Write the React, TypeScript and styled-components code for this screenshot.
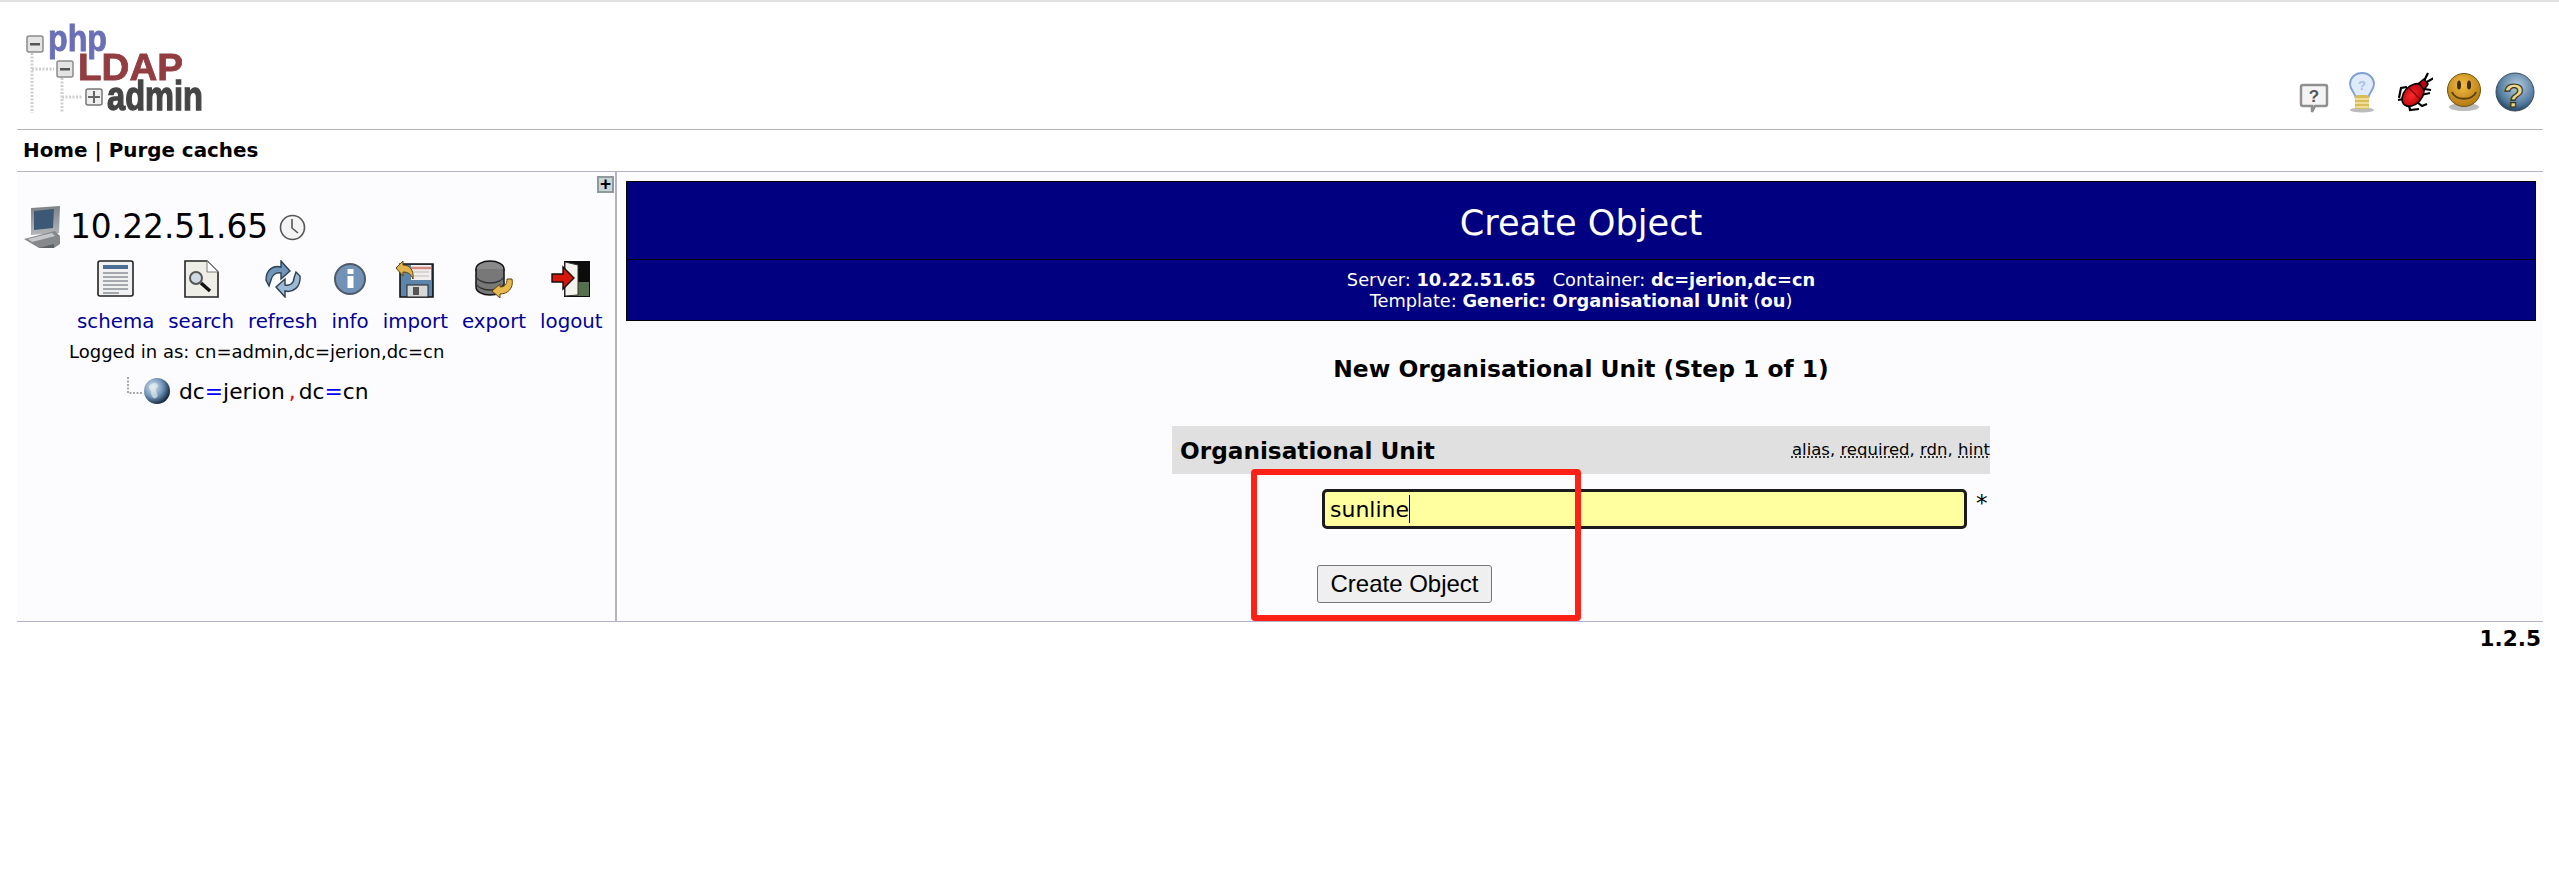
import React from "react";
import styled, { createGlobalStyle } from "styled-components";

const GlobalStyle = createGlobalStyle`
  html, body {
    margin: 0;
    padding: 0;
    background: #fff;
    font-family: "DejaVu Sans", Verdana, sans-serif;
    color: #000;
  }
`;

const RULE = "#b4b1c9";
const PANEL = "#fcfcff";

const Page = styled.div`
  min-height: 873px;
  border-top: 2px solid #e2e2e2;
  padding: 0 16px 0 17px;
  box-sizing: border-box;
`;

const Header = styled.header`
  height: 127px;
  display: flex;
  justify-content: space-between;
  align-items: flex-end;
  border-bottom: 1px solid ${RULE};
`;

const LogoWrap = styled.div`
  align-self: flex-start;
  margin: 13px 0 0 3px;
  line-height: 0;
`;

const HelpIcons = styled.div`
  display: flex;
  align-items: flex-end;
  padding: 0 8px 16px 0;
  gap: 11px;
  & > svg:first-child {
    margin-right: -3px;
  }
`;

const Nav = styled.nav`
  height: 41px;
  display: flex;
  align-items: center;
  padding-left: 6px;
  border-bottom: 1px solid ${RULE};
  font-size: 19.9px;
  font-weight: 700;
`;

const Main = styled.main`
  display: grid;
  grid-template-columns: 600px 1fr;
  height: 449px;
  border-bottom: 1px solid ${RULE};
  background: ${PANEL};
`;

const Sidebar = styled.aside`
  position: relative;
  border-right: 2px solid ${RULE};
  padding: 33px 0 0 6px;
  box-sizing: border-box;
`;

const ExpandButton = styled.div`
  position: absolute;
  top: 4px;
  right: 1px;
  width: 17px;
  height: 17px;
  box-sizing: border-box;
  border: 2px solid #8f9a9c;
  background: #c9d6d8;
  font: 700 19px/12px "Liberation Sans", sans-serif;
  text-align: center;
`;

const ServerRow = styled.div`
  display: flex;
  align-items: center;
  gap: 9px;
  height: 44px;
`;

const ServerName = styled.span`
  font-size: 32.8px;
  line-height: 44px;
  margin-right: 2px;
`;

const Actions = styled.div`
  display: flex;
  gap: 14px;
  padding: 11px 0 0 54px;
`;

const Action = styled.a`
  display: flex;
  flex-direction: column;
  align-items: center;
  gap: 12px;
  font-size: 19.8px;
  line-height: 24px;
  color: #000099;
`;

const LoggedIn = styled.div`
  font-size: 18px;
  line-height: 22px;
  padding: 7px 0 0 46px;
`;

const Tree = styled.div`
  display: flex;
  align-items: center;
  height: 36px;
  padding: 10px 0 0 104px;
  font-size: 21.8px;
`;

const Dn = styled.span`
  margin-left: 8px;
`;

const Eq = styled.span`
  color: #0000ff;
`;

const Comma = styled.span`
  color: #ff0000;
  margin: 0 3px 0 4px;
`;

const Content = styled.section`
  padding: 9px 7px 0 7px;
  border-left: 2px solid #fff;
  position: relative;
`;

const Banner = styled.div`
  background: #000080;
  border: 1px solid #000;
  color: #fff;
  text-align: center;
`;

const BannerTitle = styled.h1`
  margin: 0;
  height: 78px;
  border-bottom: 1px solid #000;
  box-sizing: border-box;
  font-size: 35.2px;
  font-weight: 400;
  line-height: 81px;
`;

const BannerMeta = styled.div`
  padding-top: 9px;
  height: 60px;
  box-sizing: border-box;
  font-size: 17.8px;
  line-height: 21px;
`;

const StepHeading = styled.h2`
  margin: 0;
  padding-top: 33px;
  height: 105px;
  box-sizing: border-box;
  font-size: 23.4px;
  line-height: 30px;
  font-weight: 700;
  text-align: center;
`;

const Form = styled.div`
  width: 818px;
  margin: 0 auto;
`;

const AttrHeader = styled.div`
  height: 48px;
  display: flex;
  align-items: center;
  justify-content: space-between;
  padding-left: 8px;
  background: #e0e0e0;
  font-size: 23.2px;
  font-weight: 700;
`;

const Hints = styled.span`
  font-size: 16.5px;
  font-weight: 400;
  margin-bottom: 2px;
`;

const Hint = styled.abbr`
  text-decoration: underline dotted;
  text-underline-offset: 2px;
`;

const FieldRow = styled.div`
  display: flex;
  align-items: flex-start;
  padding: 15px 0 0 150px;
`;

const Field = styled.div`
  width: 645px;
  height: 40px;
  box-sizing: border-box;
  border: 3.5px solid #1b1b1b;
  border-radius: 5px;
  background: #ffff9f;
  padding: 2px 0 0 5px;
  font-size: 22px;
  line-height: 32px;
  display: flex;
  align-items: center;
`;

const Caret = styled.span`
  display: inline-block;
  width: 1px;
  height: 28px;
  background: #000;
  margin-top: -2px;
`;

const Required = styled.span`
  margin-left: 9px;
  font-size: 23px;
  line-height: 28px;
`;

const CreateButton = styled.button`
  display: block;
  margin: 36px 0 0 145px;
  width: 175px;
  height: 38px;
  background: #efefef;
  border: 1px solid #767676;
  border-radius: 3px;
  color: #000;
  font: 400 24px "Liberation Sans", Arial, sans-serif;
  padding: 0;
`;

const Highlight = styled.div`
  position: absolute;
  left: 632px;
  top: 297px;
  width: 330px;
  height: 152px;
  box-sizing: border-box;
  border: 6px solid #ff2116;
  border-radius: 4px;
`;

const Version = styled.div`
  text-align: right;
  padding: 5px 2px 0 0;
  font-size: 21.6px;
  line-height: 24px;
  font-weight: 700;
`;

const Logo = () => (
  <svg width="190" height="110" viewBox="0 -10 190 110" role="img" aria-label="phpLDAPadmin">
    <defs>
      <filter id="soft"><feGaussianBlur stdDeviation="0.5" /></filter>
    </defs>
    <g filter="url(#soft)">
      <path d="M12 28V88M42 53V88M12 44H34M42 72H62" stroke="#cfcfcf" strokeWidth="3" strokeDasharray="2 1.5" fill="none" />
      <text x="28" y="26" fontFamily="Liberation Sans" fontWeight="700" fontSize="36" textLength="59" lengthAdjust="spacingAndGlyphs" fill="#6a6fb6" stroke="#6a6fb6" strokeWidth="0.8">php</text>
      <text x="58" y="55" fontFamily="Liberation Sans" fontWeight="700" fontSize="37" textLength="105" lengthAdjust="spacingAndGlyphs" fill="#923c41" stroke="#923c41" strokeWidth="0.8">LDAP</text>
      <text x="87" y="85" fontFamily="Liberation Sans" fontWeight="700" fontSize="41" textLength="96" lengthAdjust="spacingAndGlyphs" fill="#454545" stroke="#454545" strokeWidth="1.4">admin</text>
      <rect x="7" y="11" width="16" height="16" rx="2" fill="#e4e4e4" stroke="#8a8a8a" strokeWidth="1.5" />
      <rect x="10" y="18" width="10" height="2.5" fill="#555" />
      <rect x="37" y="36" width="16" height="16" rx="2" fill="#e4e4e4" stroke="#8a8a8a" strokeWidth="1.5" />
      <rect x="40" y="43" width="10" height="2.5" fill="#555" />
      <rect x="66" y="64" width="16" height="16" rx="2" fill="#eee" stroke="#777" strokeWidth="1.5" />
      <path d="M74 66V78M68 72H80" stroke="#666" strokeWidth="2" />
    </g>
  </svg>
);

const BubbleIcon = () => (
  <svg width="40" height="42" viewBox="0 0 40 42">
    <path d="M9 14h22a2 2 0 0 1 2 2v17a2 2 0 0 1-2 2H21l-3 6v-6H9a2 2 0 0 1-2-2V16a2 2 0 0 1 2-2z" fill="#f4f4f4" stroke="#8f8f8f" strokeWidth="2.5" />
    <text x="20" y="31" textAnchor="middle" fontFamily="Liberation Sans" fontWeight="700" fontSize="17" fill="#555">?</text>
  </svg>
);

const BulbIcon = () => (
  <svg width="40" height="42" viewBox="0 0 40 42">
    <ellipse cx="20" cy="39" rx="12" ry="2.5" fill="#bbb" />
    <path d="M20 2c7 0 12 5 12 11 0 6-5 8-6 15H14c-1-7-6-9-6-15C8 7 13 2 20 2z" fill="#dfeafa" stroke="#7f9fd0" strokeWidth="1.8" />
    <text x="20" y="19" textAnchor="middle" fontFamily="Liberation Sans" fontWeight="700" fontSize="13" fill="#a9bfe2">?</text>
    <rect x="13" y="24" width="14" height="14" rx="3" fill="#d8bd58" />
    <path d="M13 28h14M13 32h14M14 36h12" stroke="#f5e9b0" strokeWidth="1.6" />
  </svg>
);

const BugIcon = () => (
  <svg width="40" height="42" viewBox="0 0 40 42">
    <defs>
      <radialGradient id="bugBody" cx="45%" cy="55%" r="60%">
        <stop offset="0%" stopColor="#ff2a2a" />
        <stop offset="100%" stopColor="#b00008" />
      </radialGradient>
    </defs>
    <path
      d="M32 12l9-5M31 10l4-8M14 16l-6 1-2 10M11 28l-6 1M16 34l1 5 9-1M24 31l5 4 5-2M28 24l9-2M31 18l7 1"
      stroke="#000"
      strokeWidth="2.2"
      fill="none"
    />
    <ellipse cx="20" cy="24" rx="9" ry="13" transform="rotate(42 20 24)" fill="url(#bugBody)" stroke="#000" strokeWidth="1.6" />
    <path d="M26 12l5-4 4 5-4 6z" fill="#c40010" stroke="#000" strokeWidth="1.6" />
    <path d="M16 17l11 11" stroke="#7a0006" strokeWidth="1.3" />
  </svg>
);

const SmileIcon = () => (
  <svg width="40" height="42" viewBox="0 0 40 42">
    <defs>
      <radialGradient id="smile" cx="45%" cy="35%" r="65%">
        <stop offset="0%" stopColor="#f4bc40" />
        <stop offset="100%" stopColor="#b47a14" />
      </radialGradient>
    </defs>
    <ellipse cx="20" cy="36" rx="15" ry="4" fill="#bbb" />
    <circle cx="20" cy="19" r="16.5" fill="url(#smile)" stroke="#6d5316" strokeWidth="1" />
    <ellipse cx="15" cy="14" rx="2" ry="4.5" fill="#3f2c08" />
    <ellipse cx="25" cy="14" rx="2" ry="4.5" fill="#3f2c08" />
    <path d="M8 21c3 9 21 9 24 0" stroke="#5a4210" strokeWidth="2" fill="none" />
  </svg>
);

const HelpIcon = () => (
  <svg width="40" height="42" viewBox="0 0 40 42">
    <defs>
      <radialGradient id="helpBall" cx="55%" cy="35%" r="70%">
        <stop offset="0%" stopColor="#b7cfe0" />
        <stop offset="70%" stopColor="#50789c" />
        <stop offset="100%" stopColor="#1c3550" />
      </radialGradient>
    </defs>
    <circle cx="20" cy="21" r="19" fill="url(#helpBall)" stroke="#3b4b5b" />
    <text x="19" y="36" textAnchor="middle" fontFamily="Liberation Sans" fontWeight="700" fontSize="34" fill="#ecd98e" stroke="#3a3215" strokeWidth="1.2">?</text>
  </svg>
);

const ComputerIcon = () => (
  <svg width="38" height="44" viewBox="0 0 38 44">
    <defs>
      <linearGradient id="pc" x1="0" y1="0" x2="0" y2="1">
        <stop offset="0%" stopColor="#7d8286" />
        <stop offset="100%" stopColor="#b3b6b9" />
      </linearGradient>
    </defs>
    <path d="M8 3l29-2-1 27-28 2z" fill="url(#pc)" />
    <path d="M11 6l20-2-1 19-19 2z" fill="#3d5874" />
    <path d="M1 34l31-8 5 5v8l-6 4H16z" fill="#85898d" />
    <path d="M5 34l24-6 3 3-23 6z" fill="#c6c9cb" />
    <path d="M16 43l15-4v4z" fill="#5e6064" />
  </svg>
);

const ClockIcon = () => (
  <svg width="27" height="27" viewBox="0 0 27 27">
    <circle cx="13.5" cy="13.5" r="12" fill="#f4f4f4" stroke="#555" strokeWidth="1.6" />
    <path d="M13 5v9l6 5" stroke="#555" strokeWidth="1.6" fill="none" />
  </svg>
);

const SchemaIcon = () => (
  <svg width="38" height="38" viewBox="0 0 38 38">
    <rect x="1" y="1" width="35" height="35" rx="2" fill="#f1f1f1" stroke="#222" strokeWidth="1.6" />
    <rect x="6" y="5" width="25" height="4" fill="#4b6d96" />
    <path d="M6 13h25M6 17h25M6 21h25M6 25h25M6 29h25M6 33h16" stroke="#8a8f95" strokeWidth="1.5" />
  </svg>
);

const SearchIcon = () => (
  <svg width="36" height="38" viewBox="0 0 36 38">
    <path d="M2 1h22l11 11v25H2z" fill="#eeeee6" stroke="#222" strokeWidth="1.6" />
    <path d="M24 1v11h11z" fill="#fff" stroke="#777" />
    <circle cx="13" cy="18" r="6" fill="#cfd9e4" stroke="#555" strokeWidth="2" />
    <path d="M18 23l9 8" stroke="#111" strokeWidth="3.5" />
  </svg>
);

const RefreshIcon = () => (
  <svg width="38" height="38" viewBox="0 0 38 38">
    <path d="M2 20C2 9 10 5 17 7V1l9 10-9 8v-6c-5-1-9 2-10 7l-2 6z" fill="#6f95bb" stroke="#2c3e50" strokeWidth="1.4" />
    <path d="M36 16c1 11-7 17-15 15v6l-9-10 9-8v6c5 1 9-2 9-7l2-6z" fill="#9cbad6" stroke="#2c3e50" strokeWidth="1.4" />
  </svg>
);

const InfoIcon = () => (
  <svg width="34" height="38" viewBox="0 0 34 38">
    <circle cx="17" cy="19" r="15" fill="#7392b8" stroke="#4d5a68" strokeWidth="2" />
    <rect x="14.5" y="16" width="6" height="12" fill="#fff" />
    <rect x="14.5" y="9" width="6" height="5" fill="#fff" />
  </svg>
);

const ImportIcon = () => (
  <svg width="40" height="38" viewBox="0 0 40 38">
    <path d="M5 4h33v33H5z" fill="#5d86aa" stroke="#111" strokeWidth="1.6" />
    <rect x="16" y="5" width="20" height="15" fill="#f3eeee" />
    <path d="M16 8h20" stroke="#d58a80" strokeWidth="2.5" />
    <path d="M18 12h16M18 16h16" stroke="#bbb" />
    <rect x="12" y="25" width="21" height="12" fill="#d8d8d8" stroke="#222" />
    <rect x="18" y="27" width="6" height="8" fill="#555" />
    <path d="M1 8l7-7v4c6 0 11 4 10 14-2-5-5-7-10-7v4z" fill="#e0b34c" stroke="#5a4310" />
  </svg>
);

const ExportIcon = () => (
  <svg width="40" height="38" viewBox="0 0 40 38">
    <ellipse cx="16" cy="9" rx="14" ry="8" fill="#8a8a8a" stroke="#111" strokeWidth="1.5" />
    <path d="M2 9v18c0 5 7 8 14 8s14-3 14-8V9" fill="#787878" stroke="#111" strokeWidth="1.5" />
    <path d="M2 15c0 5 7 8 14 8s14-3 14-8M2 22c0 5 7 8 14 8s14-3 14-8" stroke="#333" strokeWidth="1.3" fill="none" />
    <path d="M18 31l8-7v3c5 0 7-3 7-8h5c2 10-5 15-12 15v4z" fill="#e7b94d" stroke="#5a4310" />
  </svg>
);

const LogoutIcon = () => (
  <svg width="40" height="38" viewBox="0 0 40 38">
    <rect x="13" y="1" width="26" height="36" fill="#0c0c0c" />
    <path d="M14 22h24v14H14z" fill="#56704f" />
    <path d="M14 2l13 3v30l-13 1z" fill="#f4f4ec" stroke="#333" />
    <path d="M1 14h11V7l11 11-11 11v-7H1z" fill="#d8170c" stroke="#111" strokeWidth="1.4" />
  </svg>
);

const ConnectorIcon = () => (
  <svg width="16" height="28" viewBox="0 0 16 28">
    <path d="M1 0v16h15" stroke="#a8a8a8" strokeWidth="2" strokeDasharray="2 1.5" fill="none" />
  </svg>
);

const GlobeIcon = () => (
  <svg width="28" height="28" viewBox="0 0 28 28">
    <defs>
      <radialGradient id="globe" cx="35%" cy="35%" r="70%">
        <stop offset="0%" stopColor="#dbe6f0" />
        <stop offset="55%" stopColor="#6f94b8" />
        <stop offset="100%" stopColor="#0f2238" />
      </radialGradient>
    </defs>
    <circle cx="14" cy="14" r="13" fill="url(#globe)" />
    <path d="M7 8c4-3 7-2 8 0s-3 3-2 6 3 5 0 7-5-3-5-6-4-4-1-7z" fill="#f0f2f3" opacity=".6" />
  </svg>
);

const actions = [
  { label: "schema", icon: <SchemaIcon /> },
  { label: "search", icon: <SearchIcon /> },
  { label: "refresh", icon: <RefreshIcon /> },
  { label: "info", icon: <InfoIcon /> },
  { label: "import", icon: <ImportIcon /> },
  { label: "export", icon: <ExportIcon /> },
  { label: "logout", icon: <LogoutIcon /> },
];

export default function App() {
  return (
    <>
      <GlobalStyle />
      <Page>
        <Header>
          <LogoWrap>
            <Logo />
          </LogoWrap>
          <HelpIcons>
            <BubbleIcon />
            <BulbIcon />
            <BugIcon />
            <SmileIcon />
            <HelpIcon />
          </HelpIcons>
        </Header>
        <Nav>Home | Purge caches</Nav>
        <Main>
          <Sidebar>
            <ExpandButton>+</ExpandButton>
            <ServerRow>
              <ComputerIcon />
              <ServerName>10.22.51.65</ServerName>
              <ClockIcon />
            </ServerRow>
            <Actions>
              {actions.map((a) => (
                <Action key={a.label}>
                  {a.icon}
                  {a.label}
                </Action>
              ))}
            </Actions>
            <LoggedIn>Logged in as: cn=admin,dc=jerion,dc=cn</LoggedIn>
            <Tree>
              <ConnectorIcon />
              <GlobeIcon />
              <Dn>
                dc<Eq>=</Eq>jerion<Comma>,</Comma>dc<Eq>=</Eq>cn
              </Dn>
            </Tree>
          </Sidebar>
          <Content>
            <Banner>
              <BannerTitle>Create Object</BannerTitle>
              <BannerMeta>
                Server: <b>10.22.51.65</b>&nbsp;&nbsp; Container: <b>dc=jerion,dc=cn</b>
                <br />
                Template: <b>Generic: Organisational Unit</b> (<b>ou</b>)
              </BannerMeta>
            </Banner>
            <StepHeading>New Organisational Unit (Step 1 of 1)</StepHeading>
            <Form>
              <AttrHeader>
                Organisational Unit
                <Hints>
                  <Hint>alias</Hint>, <Hint>required</Hint>, <Hint>rdn</Hint>, <Hint>hint</Hint>
                </Hints>
              </AttrHeader>
              <FieldRow>
                <Field>
                  sunline
                  <Caret />
                </Field>
                <Required>*</Required>
              </FieldRow>
              <CreateButton type="button">Create Object</CreateButton>
            </Form>
            <Highlight />
          </Content>
        </Main>
        <Version>1.2.5</Version>
      </Page>
    </>
  );
}
